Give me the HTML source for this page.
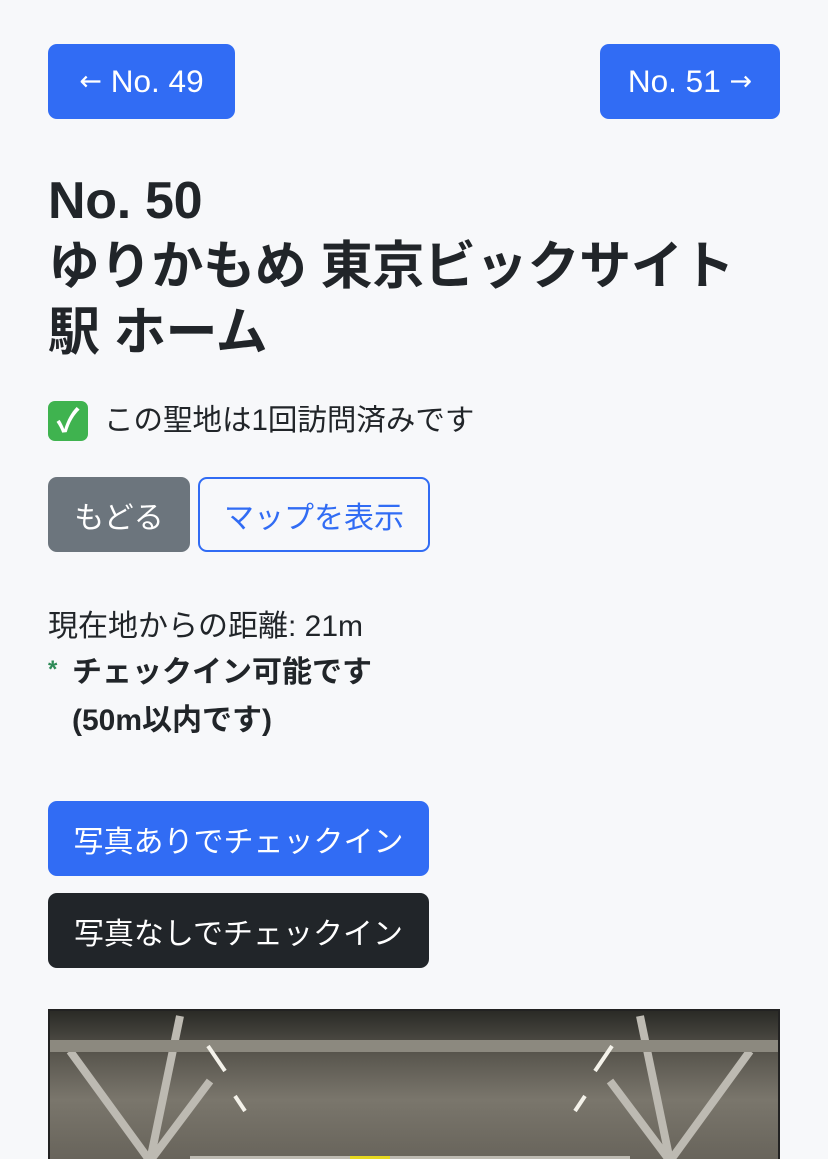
<!DOCTYPE html>
<html><head><meta charset="utf-8"><style>
body{margin:0;width:828px;height:1159px;background:#f7f8fa;font-family:"Liberation Sans","Noto Sans CJK JP",sans-serif;color:#212529;overflow:hidden;position:relative}
.a{position:absolute}
.btn{position:absolute;box-sizing:border-box;border-radius:9px;font-size:30px;display:flex;align-items:center;justify-content:center;height:75px}
.t{position:absolute;left:48px;font-size:30px;white-space:nowrap;line-height:1}
.ar{font-family:"DejaVu Sans",sans-serif;font-size:27px}
</style></head><body>
<div class="btn" style="left:48px;top:44px;width:187px;background:#316cf4;color:#fff;font-size:31.5px"><span class="ar">←</span>&nbsp;No. 49</div>
<div class="btn" style="left:600px;top:44px;width:180px;background:#316cf4;color:#fff;font-size:31.5px">No. 51&nbsp;<span class="ar">→</span></div>
<div class="a" style="left:48px;top:168px;font-size:52px;font-weight:bold;line-height:66px;width:760px;letter-spacing:-0.3px">No. 50<br>ゆりかもめ 東京ビックサイト<br>駅 ホーム</div>
<div class="a" style="left:48px;top:401px;width:40px;height:40px;background:#3fb34f;border-radius:7px;color:#fff;text-align:center;line-height:40px;font-size:32px;font-weight:bold">✓</div>
<div class="t" style="top:406px;left:104px;font-size:29.5px">この聖地は1回訪問済みです</div>
<div class="btn" style="left:48px;top:477px;width:142px;background:#6c757d;color:#fff">もどる</div>
<div class="btn" style="left:198px;top:477px;width:232px;border:2px solid #316cf4;color:#316cf4;background:transparent">マップを表示</div>
<div class="t" style="top:612px">現在地からの距離: 21m</div>
<div class="t" style="top:658px;color:#2e8b57;font-size:24px;font-weight:bold">*</div>
<div class="t" style="top:658px;left:72px;font-weight:bold">チェックイン可能です</div>
<div class="t" style="top:706px;left:72px;font-weight:bold">(50m以内です)</div>
<div class="btn" style="left:48px;top:801px;width:381px;background:#316cf4;color:#fff">写真ありでチェックイン</div>
<div class="btn" style="left:48px;top:893px;width:381px;background:#212529;color:#fff">写真なしでチェックイン</div>
<div class="a" style="left:48px;top:1009px;width:732px;height:150px;box-sizing:border-box;border:2px solid #222;border-bottom:none;background:linear-gradient(180deg,#2a2a26 0%,#5a574f 30%,#7a766c 60%,#68645b 100%);overflow:hidden">
<svg width="732" height="150" style="position:absolute;left:0;top:0">
<g stroke="#bdbab2" stroke-width="8" fill="none">
<line x1="20" y1="40" x2="100" y2="150"/><line x1="130" y1="5" x2="100" y2="150"/><line x1="160" y1="70" x2="100" y2="150"/>
<line x1="700" y1="40" x2="620" y2="150"/><line x1="590" y1="5" x2="620" y2="150"/><line x1="560" y1="70" x2="620" y2="150"/>
<line x1="0" y1="35" x2="732" y2="35" stroke-width="12" stroke="#8c897f"/>
<line x1="140" y1="150" x2="580" y2="150" stroke-width="10"/>
</g>
<g stroke="#f4f2ea" stroke-width="4"><line x1="158" y1="35" x2="175" y2="60"/><line x1="562" y1="35" x2="545" y2="60"/><line x1="185" y1="85" x2="195" y2="100"/><line x1="535" y1="85" x2="525" y2="100"/></g>
<rect x="300" y="145" width="40" height="5" fill="#e6d820"/>
</svg></div>
</body></html>
